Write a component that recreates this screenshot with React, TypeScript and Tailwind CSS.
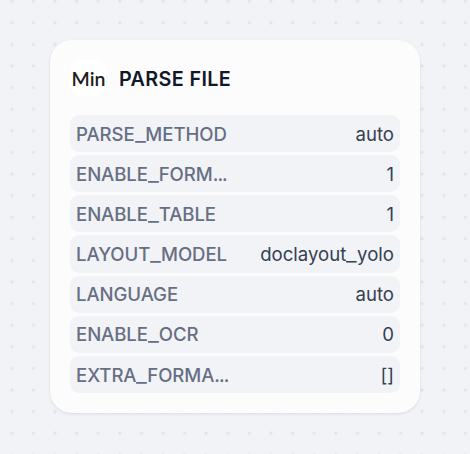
import { Fragment } from "react";

type Param = { label: string; value: string; truncated?: boolean };

const params: Param[] = [
  { label: "PARSE_METHOD", value: "auto" },
  { label: "ENABLE_FORM", value: "1", truncated: true },
  { label: "ENABLE_TABLE", value: "1" },
  { label: "LAYOUT_MODEL", value: "doclayout_yolo" },
  { label: "LANGUAGE", value: "auto" },
  { label: "ENABLE_OCR", value: "0" },
  { label: "EXTRA_FORMA", value: "[]", truncated: true },
];

function CanvasDots() {
  return (
    <svg className="absolute inset-0 h-full w-full" aria-hidden="true">
      <defs>
        <pattern id="dots" x="1" y="-9.6" width="21.6" height="21.6" patternUnits="userSpaceOnUse">
          <circle cx="10.8" cy="10.8" r="1.6" fill="#e2e3e8" />
        </pattern>
      </defs>
      <rect width="100%" height="100%" fill="url(#dots)" />
    </svg>
  );
}

// Identifiers are set with a wide underscore between their parts.
function Identifier({ text }: { text: string }) {
  return (
    <>
      {text.split("_").map((part, i) => (
        <Fragment key={i}>
          {i > 0 && <span className="inline-block w-[10.8px] origin-left scale-x-[1.25]">_</span>}
          {part}
        </Fragment>
      ))}
    </>
  );
}

function Row({ label, value, truncated }: Param) {
  return (
    <div className="flex h-[37.16px] items-center justify-between rounded-[9px] bg-[#f2f3f7] px-[6px] text-[18.6px] leading-6 [font-feature-settings:'calt'_0]">
      <span className="font-medium tracking-[-0.08px] text-[#676f83]">
        <Identifier text={label} />
        {truncated && <span className="tracking-[-0.9px]">...</span>}
      </span>
      <span className="text-[#354052]">
        <Identifier text={value} />
      </span>
    </div>
  );
}

export default function App() {
  return (
    <div className="relative h-[454px] w-[470px] overflow-hidden bg-[#f2f3f7] px-[50px] pt-[40px] font-['Inter',sans-serif]">
      <CanvasDots />
      <section className="relative h-[373px] w-[370px] rounded-[22px] bg-[#fcfcfd] px-5 pt-5 shadow-[0_1px_3px_rgba(16,24,40,0.10)]">
        <header className="flex h-9 items-center gap-[13px]">
          <div className="flex size-9 items-center justify-center rounded-[9px] bg-white pt-[2px] pl-[1px] font-['Lato',sans-serif] text-[19.5px] leading-none font-semibold text-[#1d1d1d]">
            <span>Min</span>
          </div>
          <h1 className="pt-[2px] text-[19.8px] leading-6 font-semibold tracking-[0.36px] text-[#101828]">PARSE FILE</h1>
        </header>
        <div className="mt-[19px] flex flex-col gap-[3px]">
          {params.map((param) => (
            <Row key={param.label} {...param} />
          ))}
        </div>
      </section>
    </div>
  );
}
